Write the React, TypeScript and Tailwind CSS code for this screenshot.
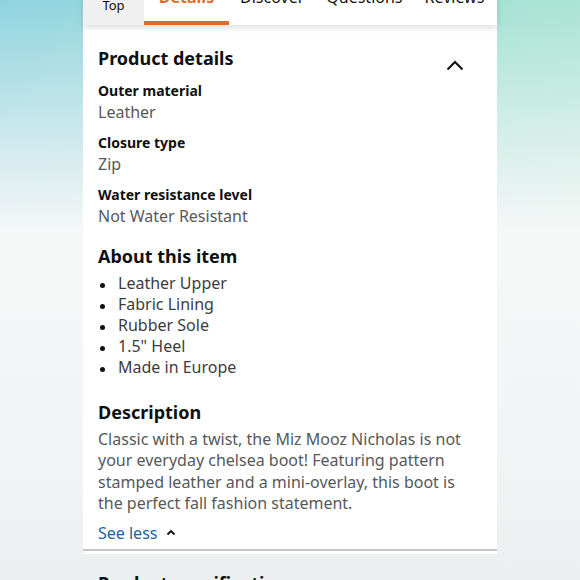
const font = { fontFamily: '"Noto Sans", "Liberation Sans", sans-serif' }

type Spec = { label: string; value: string }

const specs: Spec[] = [
  { label: 'Outer material', value: 'Leather' },
  { label: 'Closure type', value: 'Zip' },
  { label: 'Water resistance level', value: 'Not Water Resistant' },
]

const bullets = ['Leather Upper', 'Fabric Lining', 'Rubber Sole', '1.5" Heel', 'Made in Europe']

function TabBar() {
  return (
    <div className="relative z-10 mt-[-26px] flex h-[51px] bg-white shadow-[0_3px_6px_rgba(0,0,0,0.13)]">
      <div className="flex w-[61px] items-end justify-center bg-[#f0f0f0] pb-[11px]">
        <span className="text-[13px] leading-[18px] text-[#0f1111]">Top</span>
      </div>
      <div className="relative flex w-[85px] items-end justify-center pb-[17px]">
        <span className="text-[16px] font-bold leading-[22px] text-[#e3692b]">Details</span>
        <div className="absolute bottom-0 left-0 right-0 h-[4px] bg-[#e3692b]" />
      </div>
      <div className="flex items-end gap-[22px] pb-[17px] pl-[11px] text-[16px] leading-[22px] text-[#0f1111]">
        <span>Discover</span>
        <span>Questions</span>
        <span>Reviews</span>
      </div>
    </div>
  )
}

function ChevronUp() {
  return (
    <svg width="18" height="11" viewBox="0 0 18 11" className="mr-[18px] mt-[15px] shrink-0">
      <path d="M1.5 9.5 L9 2 L16.5 9.5" fill="none" stroke="#0f1111" strokeWidth="2" />
    </svg>
  )
}

export default function App() {
  return (
    <div
      className="h-[580px] w-full overflow-hidden bg-[linear-gradient(to_bottom,rgba(247,247,247,0)_0%,#f6f7f7_40%,#f3f4f5_75%,#eceef0_100%),linear-gradient(to_right,#8fd3df,#a9e4d2)]"
      style={font}
    >
      <div className="mx-auto h-full w-[414px] bg-white">
        <TabBar />

        <div className="flex flex-col px-[15px] pt-[20px]">
          <div className="flex items-start justify-between">
            <h2 className="text-[18px] font-bold leading-[26px] text-[#0f1111]">Product details</h2>
            <ChevronUp />
          </div>

          <div className="mt-[9.5px] flex flex-col gap-[10px]">
            {specs.map((spec) => (
              <div key={spec.label} className="flex flex-col">
                <span className="text-[14px] font-bold leading-[20px] text-[#0f1111]">{spec.label}</span>
                <span className="text-[16px] leading-[22px] text-[#565959]">{spec.value}</span>
              </div>
            ))}
          </div>

          <h2 className="mt-[16.5px] text-[18px] font-bold leading-[26px] text-[#0f1111]">About this item</h2>
          <ul className="mt-[4.3px] flex flex-col">
            {bullets.map((item) => (
              <li key={item} className="flex text-[16px] leading-[21px]">
                <span className="flex w-[20px] shrink-0 items-start pl-[2px] pt-[10px]">
                  <span className="h-[5px] w-[5px] rounded-full bg-[#0f1111]" />
                </span>
                <span className="text-[#3b3d3d]">{item}</span>
              </li>
            ))}
          </ul>

          <h2 className="mt-[20.7px] text-[18px] font-bold leading-[26px] text-[#0f1111]">Description</h2>
          <p className="mt-[4.1px] text-[16px] leading-[21.3px] text-[#565959]">
            Classic with a twist, the Miz Mooz Nicholas is not your everyday chelsea boot! Featuring pattern
            stamped leather and a mini-overlay, this boot is the perfect fall fashion statement.
          </p>

          <button
            type="button"
            className="mt-[7.5px] flex items-center gap-[9px] self-start text-[16px] leading-[22px] text-[#2162a1]"
          >
            See less
            <svg width="10" height="7" viewBox="0 0 10 7">
              <path d="M1.5 5.5 L5 2 L8.5 5.5" fill="none" stroke="#0f1111" strokeWidth="1.8" />
            </svg>
          </button>
        </div>

        <div className="mt-[5px] h-[2px] bg-[#c4c4c4]" />

        <h2 className="mt-[19px] px-[15px] text-[18px] font-bold leading-[26px] text-[#0f1111]">
          Product specifications
        </h2>
      </div>
    </div>
  )
}
